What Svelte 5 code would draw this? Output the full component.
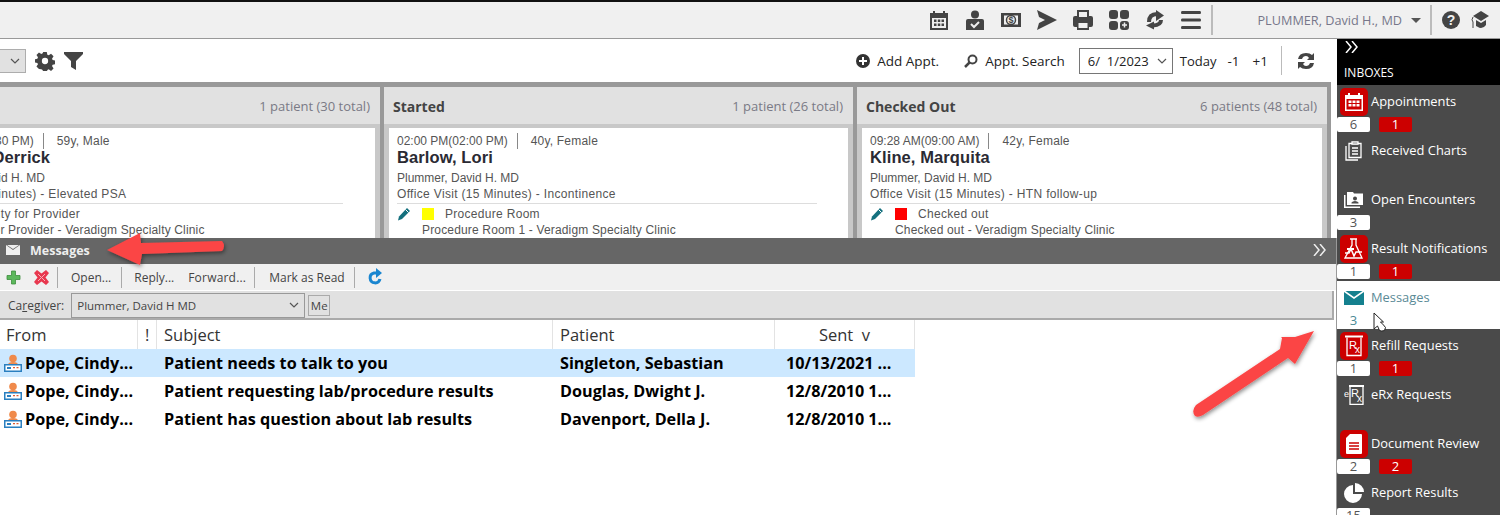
<script>
  const columns = [
    {
      title: '',
      count: '1 patient (30 total)',
      width: 470,
      time: '01:30 PM(01:30 PM)',
      age: '59y, Male',
      name: 'Morgan, Derrick',
      provider: 'Plummer, David H. MD',
      visit: 'Annual (15 Minutes) - Elevated PSA',
      status: 'Priority for Provider',
      location: 'Priority for Provider - Veradigm Specialty Clinic',
      color: '#fff'
    },
    {
      title: 'Started',
      count: '1 patient (26 total)',
      width: 469,
      time: '02:00 PM(02:00 PM)',
      age: '40y, Female',
      name: 'Barlow, Lori',
      provider: 'Plummer, David H. MD',
      visit: 'Office Visit (15 Minutes) - Incontinence',
      status: 'Procedure Room',
      location: 'Procedure Room 1 - Veradigm Specialty Clinic',
      color: '#ffff00'
    },
    {
      title: 'Checked Out',
      count: '6 patients (48 total)',
      width: 470,
      time: '09:28 AM(09:00 AM)',
      age: '42y, Female',
      name: 'Kline, Marquita',
      provider: 'Plummer, David H. MD',
      visit: 'Office Visit (15 Minutes) - HTN follow-up',
      status: 'Checked out',
      location: 'Checked out - Veradigm Specialty Clinic',
      color: '#ff0000'
    }
  ];

  const messages = [
    { from: 'Pope, Cindy...', subject: 'Patient needs to talk to you', patient: 'Singleton, Sebastian', sent: '10/13/2021 ...', selected: true },
    { from: 'Pope, Cindy...', subject: 'Patient requesting lab/procedure results', patient: 'Douglas, Dwight J.', sent: '12/8/2010 1...' },
    { from: 'Pope, Cindy...', subject: 'Patient has question about lab results', patient: 'Davenport, Della J.', sent: '12/8/2010 1...' }
  ];

  const inboxes = [
    { id: 'appointments', label: 'Appointments', count: '6', alert: '1' },
    { id: 'charts', label: 'Received Charts' },
    { id: 'encounters', label: 'Open Encounters', count: '3' },
    { id: 'results', label: 'Result Notifications', count: '1', alert: '1' },
    { id: 'messages', label: 'Messages', count: '3', active: true },
    { id: 'refill', label: 'Refill Requests', count: '1', alert: '1' },
    { id: 'erx', label: 'eRx Requests' },
    { id: 'documents', label: 'Document Review', count: '2', alert: '2' },
    { id: 'reports', label: 'Report Results', count: '15' }
  ];
</script>

<div class="page">
  <header class="topbar">
    <div class="top-icons">
      <svg width="20" height="20" viewBox="0 0 20 20"><path fill="#444" fill-rule="evenodd" d="M1 3h3V1h2v2h8V1h2v2h3v17H1zM3 8v10h14V8z"/><path fill="#444" d="M5 9.500h2.500V12H5zM8.800 9.500h2.500V12H8.800zM12.500 9.500H15V12h-2.500zM5 13.500h2.500V16H5zM8.800 13.500h2.500V16H8.800zM12.500 13.500H15V16h-2.500z"/></svg>
      <svg width="20" height="20" viewBox="0 0 20 20"><circle cx="10" cy="4.500" r="4" fill="#444"/><path fill="#444" d="M1 20v-9q0-2 2-2h14q2 0 2 2v9z"/><path fill="none" stroke="#eee" stroke-width="2" d="M6 14l3 3 5-5"/></svg>
      <svg width="20" height="20" viewBox="0 0 20 20"><path fill="#444" fill-rule="evenodd" d="M0 3h20v14H0zM3 5.500v9h14v-9z"/><circle cx="10" cy="10" r="4.500" fill="none" stroke="#444" stroke-width="1.500"/><text x="10" y="13" class="dollar">$</text></svg>
      <svg width="20" height="20" viewBox="0 0 20 20"><path fill="#444" d="M0 0l20 10L0 20l2-7 6-3-6-3z"/></svg>
      <svg width="20" height="20" viewBox="0 0 20 20"><path fill="#444" fill-rule="evenodd" d="M4 0h12v6h2q2 0 2 2v7q0 2-2 2h-2v3H4v-3H2q-2 0-2-2V8q0-2 2-2h2zM6 2v5h8V2zM5.500 13v5h9v-5z"/></svg>
      <svg width="20" height="20" viewBox="0 0 20 20"><rect width="9" height="9" rx="3" fill="#444"/><rect x="11" width="9" height="9" rx="3" fill="#444"/><rect y="11" width="9" height="9" rx="3" fill="#444"/><rect x="11" y="11" width="9" height="9" rx="3" fill="#444"/><path stroke="#eee" stroke-width="1.500" d="M15.500 12.500v5M13 15h5"/></svg>
      <svg width="20" height="20" viewBox="0 0 20 20"><path fill="none" stroke="#444" stroke-width="4" d="M4 12Q4 4 12 4"/><path fill="#444" d="M11 0l8 5.500-8 5.500z"/><path fill="none" stroke="#444" stroke-width="4" d="M16 10Q16 15 8 15.500"/><path fill="#444" d="M9 11.500l-8 4 8 4z"/></svg>
      <svg width="20" height="20" viewBox="0 0 20 20"><path fill="#444" d="M1 1h18q1 0 1 1.500T19 4H1Q0 4 0 2.500T1 1zM1 8.500h18q1 0 1 1.500t-1 1.500H1Q0 11.500 0 10t1-1.500zM1 16h18q1 0 1 1.500T19 19H1q-1 0-1-1.500T1 16z"/></svg>
    </div>
    <span class="top-sep first"></span>
    <span class="user">PLUMMER, David H., MD</span>
    <span class="caret"></span>
    <span class="top-sep"></span>
    <svg class="help" width="18" height="18" viewBox="0 0 18 18"><circle cx="9" cy="9" r="9" fill="#444"/><text x="9" y="14" class="qmark">?</text></svg>
    <svg class="cap" width="18" height="18" viewBox="0 0 18 18"><path fill="#444" d="M10 0l8 5-8 5-8-5zM5 9l5 3 5-3v5q-2 3-5 3-2 0-3-1l-2-1z"/><path fill="none" stroke="#444" d="M2 6q-2 3 0 5v6"/></svg>
  </header>

  <div class="workspace">
    <main class="main">
      <div class="toolbar">
        <div class="select-stub"><svg width="10" height="6" viewBox="0 0 10 6"><path fill="none" stroke="#555" stroke-width="1.200" d="M1 1l4 4 4-4"/></svg></div>
        <svg class="gear" width="20" height="20" viewBox="0 0 20 20"><path fill="#444" fill-rule="evenodd" d="M8 0h4l.6 3 1.500.7 2.600-1.700 2.800 2.800-1.700 2.600.7 1.500 3 .6v4l-3 .6-.7 1.500 1.700 2.600-2.800 2.800-2.600-1.700-1.500.7-.6 3H8l-.6-3-1.500-.7L3.300 19 .5 16.200l1.700-2.600-.7-1.500-3-.6V8l3-.6.7-1.500L.5 3.300 3.300.5l2.600 1.700 1.500-.7zM10 6.500a3.500 3.500 0 1 0 0 7 3.500 3.500 0 0 0 0-7z" transform="translate(1 1) scale(.9)"/></svg>
        <svg class="filter" width="20" height="18" viewBox="0 0 20 18"><path fill="#444" d="M0 0h19v2l-7 7v9l-5-3V9L0 2z"/></svg>
        <span class="spacer"></span>
        <button class="tool add"><svg width="14" height="14" viewBox="0 0 14 14"><circle cx="7" cy="7" r="7" fill="#333"/><path stroke="#fff" stroke-width="2" d="M7 3v8M3 7h8"/></svg>Add Appt.</button>
        <button class="tool search"><svg width="14" height="14" viewBox="0 0 14 14"><circle cx="8.500" cy="5.500" r="4" fill="none" stroke="#444" stroke-width="2"/><path stroke="#444" stroke-width="2.500" d="M5.500 8.500L1 13"/></svg>Appt. Search</button>
        <div class="date">6/ &nbsp;1/2023<svg width="10" height="6" viewBox="0 0 10 6"><path fill="none" stroke="#555" stroke-width="1.200" d="M1 1l4 4 4-4"/></svg></div>
        <span class="today">Today</span>
        <span class="step">-1</span>
        <span class="step plus">+1</span>
        <span class="tool-sep"></span>
        <svg class="refresh" width="20" height="18" viewBox="0 0 20 18"><path fill="#444" d="M2 7q1-6 8-6 4 0 6 2l2-2v7h-7l2-2q-1-2-3-2-3 0-4 3zM18 11q-1 6-8 6-4 0-6-2l-2 2v-7h7l-2 2q1 2 3 2 3 0 4-3z"/></svg>
      </div>

      <section class="board">
        {#each columns as col}
          <article class="column" style="width: {col.width}px">
            <div class="col-head">
              <strong>{col.title}</strong>
              <span>{col.count}</span>
            </div>
            <div class="card">
              <div class="times"><span class="time">{col.time}</span><span class="age">{col.age}</span></div>
              <div class="name">{col.name}</div>
              <div class="line provider">{col.provider}</div>
              <div class="line visit">{col.visit}</div>
              <hr />
              <div class="status">
                <svg width="14" height="14" viewBox="0 0 14 14"><path fill="#14707e" d="M10 1l3 3-8 8-4 1.500L2 9.500z"/><path stroke="#fff" d="M8.500 2.500l3 3"/></svg>
                <i style="background: {col.color}"></i>
                <span>{col.status}</span>
              </div>
              <div class="line location">{col.location}</div>
            </div>
          </article>
        {/each}
      </section>

      <section class="messages">
        <div class="msg-title">
          <svg width="14" height="10" viewBox="0 0 14 10"><path fill="#eee" d="M0 0l7 5 7-5v10H0z"/><path fill="#eee" d="M1 0h12L7 4z"/></svg>
          <strong>Messages</strong>
          <span class="spacer"></span>
          <svg class="chev" width="14" height="12" viewBox="0 0 14 12"><path fill="none" stroke="#eee" stroke-width="1.500" d="M1 0l5 6-5 6M7 0l5 6-5 6"/></svg>
        </div>
        <div class="msg-tools">
          <svg class="plus-i" width="15" height="15" viewBox="0 0 15 15"><path fill="#5cb85c" stroke="#3e8e3e" stroke-width=".8" d="M5.500 1h4v4.500H14v4H9.500V14h-4V9.500H1v-4h4.500z"/></svg>
          <svg class="x-i" width="15" height="15" viewBox="0 0 15 15"><path fill="#e8384f" d="M3 0l4.500 3.500L12 0l3 3-3.500 4.500L15 12l-3 3-4.500-3.500L3 15l-3-3 3.500-4.500L0 3z"/><path stroke="#f8b0b8" d="M4 4l7 7M11 4l-7 7"/></svg>
          <span class="v"></span>
          <span class="cmd open">Open...</span>
          <span class="v wide"></span>
          <span class="cmd reply">Reply...</span>
          <span class="cmd forward">Forward...</span>
          <span class="v"></span>
          <span class="cmd mark">Mark as Read</span>
          <span class="v last"></span>
          <svg class="renew" width="16" height="18" viewBox="0 0 16 18"><path fill="none" stroke="#1a86d0" stroke-width="3" d="M9 5H7a5 5 0 1 0 6 6"/><path fill="#1a86d0" d="M9 0l6 5-6 5z"/></svg>
        </div>
        <div class="caregiver">
          <span class="cg-label">Ca<u>r</u>egiver:</span>
          <div class="cg-select">Plummer, David H MD<svg width="10" height="6" viewBox="0 0 10 6"><path fill="none" stroke="#555" stroke-width="1.200" d="M1 1l4 4 4-4"/></svg></div>
          <div class="me">Me</div>
        </div>
        <div class="table">
          <div class="row head">
            <div class="c-from">From</div>
            <div class="c-flag">!</div>
            <div class="c-subject">Subject</div>
            <div class="c-patient">Patient</div>
            <div class="c-sent">Sent &nbsp;v</div>
          </div>
          {#each messages as m}
            <div class="row item" class:selected={m.selected}>
              <div class="c-from">
                <svg width="18" height="18" viewBox="0 0 18 18"><circle cx="9" cy="4.500" r="3.800" fill="#f08a4b"/><path fill="#f08a4b" d="M4 11q0-3 5-3t5 3z"/><path fill="#2a7fc0" d="M0 10h18v8H0z"/><path fill="#fff" d="M1.500 11.500h15v5h-15z"/><path fill="#2a7fc0" d="M3 13h4v2H3z"/><path fill="#e05a30" d="M9 13h2v1.200H9zM12.500 13h2v1.200h-2z"/></svg>
                <span>{m.from}</span>
              </div>
              <div class="c-flag"></div>
              <div class="c-subject">{m.subject}</div>
              <div class="c-patient">{m.patient}</div>
              <div class="c-sent">{m.sent}</div>
            </div>
          {/each}
        </div>
      </section>
    </main>

    <aside class="inboxes">
      <div class="ib-head">
        <svg width="14" height="12" viewBox="0 0 14 12"><path fill="none" stroke="#fff" stroke-width="1.500" d="M1 0l5 6-5 6M7 0l5 6-5 6"/></svg>
        <span>INBOXES</span>
      </div>
      {#each inboxes as box}
        <div class="box" class:active={box.active}>
          <div class="box-top">
            <div class="ib-icon" class:alert={box.alert}>
              {#if box.id === 'appointments'}
                <svg width="20" height="20" viewBox="0 0 20 20"><path fill="#fff" fill-rule="evenodd" d="M1 3h3V1h2v2h8V1h2v2h3v16H1zM2.500 7v10.500h15V7z"/><path fill="#fff" d="M4.500 8.500h3V11h-3zM8.500 8.500h3V11h-3zM12.500 8.500h3V11h-3zM4.500 12h3v2.500h-3zM8.500 12h3v2.500h-3zM12.500 12h3v2.500h-3z"/></svg>
              {:else if box.id === 'charts'}
                <svg width="18" height="20" viewBox="0 0 18 20"><path fill="none" stroke="#fff" stroke-width="1.300" d="M1 5v14h12M4 2.500h12v14H4z"/><path stroke="#fff" stroke-width="1.300" d="M7 7h6M7 10h6M7 13h6M7 1h6v2H7z"/></svg>
              {:else if box.id === 'encounters'}
                <svg width="20" height="18" viewBox="0 0 20 18"><path fill="#fff" d="M0 4h1.500v11.500H16V17H0z"/><path fill="#fff" fill-rule="evenodd" d="M3 1h6l1 1.500h9V14H3zM11 5.500a2 2 0 1 0 0 4 2 2 0 0 0 0-4zM7.500 11.500v1h7v-1q-1-1.500-3.500-1.500t-3.500 1.500z"/></svg>
              {:else if box.id === 'results'}
                <svg width="20" height="22" viewBox="0 0 20 22"><path fill="none" stroke="#fff" stroke-width="1.300" d="M6 1h7M8 1v6l-7 13h17L12 7V1"/><path fill="#fff" d="M3 10h7v2H3z"/><path fill="none" stroke="#fff" stroke-width="1.500" d="M1 15h4l2-4 3 7 2-4h6"/></svg>
              {:else if box.id === 'messages'}
                <svg width="20" height="14" viewBox="0 0 20 14"><path fill="#14808e" d="M0 1l10 7 10-7v13H0z"/><path fill="#14808e" d="M1.500 0h17L10 6z"/></svg>
              {:else if box.id === 'refill'}
                <svg width="18" height="22" viewBox="0 0 18 22"><path fill="none" stroke="#fff" stroke-width="1.300" d="M2 2.500v18h14v-18"/><path stroke="#fff" stroke-width="2" d="M0 1.500h18"/><text x="4" y="14" class="rx">R</text><text x="10" y="18" class="rx small">x</text></svg>
              {:else if box.id === 'erx'}
                <svg width="20" height="20" viewBox="0 0 20 20"><path fill="none" stroke="#fff" stroke-width="1.300" d="M6 1.500v18h13v-18"/><path stroke="#fff" stroke-width="2" d="M5 1h15"/><text x="0" y="12" class="rx e">e</text><text x="7" y="12" class="rx">R</text><text x="13" y="17" class="rx small">x</text></svg>
              {:else if box.id === 'documents'}
                <svg width="18" height="20" viewBox="0 0 18 20"><path fill="#fff" d="M5 0h11q1 0 1 1v18q0 1-1 1H2q-1 0-1-1V4z"/><path stroke="#c00" stroke-width="1.500" d="M4 9h10M4 12h10M4 15h10"/></svg>
              {:else}
                <svg width="20" height="20" viewBox="0 0 20 20"><path fill="#fff" d="M9 2v9h9a9 9 0 1 1-9-9zM11 0a9 9 0 0 1 9 9h-9z"/></svg>
              {/if}
            </div>
            <span class="label">{box.label}</span>
          </div>
          <div class="badges">
            {#if box.count}<span class="count">{box.count}</span>{/if}
            {#if box.alert}<span class="warn">{box.alert}</span>{/if}
          </div>
        </div>
      {/each}
    </aside>
  </div>

  <svg class="overlay" width="1500" height="515" viewBox="0 0 1500 515">
    <defs>
      <filter id="shade" x="-20%" y="-40%" width="140%" height="180%">
        <feDropShadow dx="1" dy="2" stdDeviation="2" flood-color="#000" flood-opacity=".45" />
      </filter>
    </defs>
    <path filter="url(#shade)" fill="#fb4545" d="M107 250L140 233L141 243L222 241Q226 246 222 251L142 254L140 265z" />
    <path filter="url(#shade)" fill="#fb4545" d="M1314 331L1295 337L1281 337L1282 338L1280 349L1196 405Q1191 411 1195 416Q1198 418 1203 415L1288 358L1295 364z" />
    <path fill="#fff" stroke="#222" d="M1374 313v16l3.500-3 2 4.500q2 1 5 0l1-3 -2-2.500 -3-3h3z" />
  </svg>
</div>

<style>
  :global(body) {
    margin: 0;
    background: #fff;
  }

  .page {
    position: relative;
    width: 1500px;
    height: 515px;
    overflow: hidden;
    font-family: "Open Sans", sans-serif;
    color: #333;
  }

  .overlay {
    position: absolute;
    left: 0;
    top: 0;
    pointer-events: none;
  }

  .spacer {
    flex: 1;
  }

  /* top bar */
  .topbar {
    height: 36px;
    box-sizing: content-box;
    border-top: 2px solid #111;
    border-bottom: 1px solid #999;
    background: #f0f0f0;
    display: flex;
    align-items: center;
    justify-content: flex-end;
  }

  .top-icons {
    display: flex;
    gap: 16px;
    margin-right: 10px;
    align-items: center;
  }

  .dollar,
  .qmark {
    font-family: "Liberation Sans", sans-serif;
    font-weight: 700;
    text-anchor: middle;
    fill: #444;
  }

  .dollar {
    font-size: 9px;
  }

  .qmark {
    font-size: 14px;
    fill: #f0f0f0;
  }

  .top-sep {
    width: 2px;
    height: 30px;
    background: #bbb;
    margin: 0 10px 0 0;
  }

  .top-sep.first {
    margin-right: 44px;
  }

  .user {
    font-size: 12.700px;
    color: #77778a;
  }

  .caret {
    width: 0;
    height: 0;
    border-left: 5px solid transparent;
    border-right: 5px solid transparent;
    border-top: 5px solid #555;
    margin: 0 9px 0 9px;
  }

  .help {
    margin-right: 11px;
  }

  .cap {
    margin-right: 11px;
  }

  /* layout */
  .workspace {
    display: flex;
    height: 477px;
  }

  .main {
    width: 1337px;
    flex: none;
    display: flex;
    flex-direction: column;
    overflow: hidden;
    box-sizing: border-box;
  }

  /* appointment toolbar */
  .toolbar {
    height: 43px;
    width: 1331px;
    display: flex;
    align-items: center;
    flex: none;
    font-size: 13.500px;
    color: #222;
  }

  .select-stub {
    width: 26px;
    height: 24px;
    background: #e1e1e1;
    border: 1px solid #adadad;
    border-left: none;
    display: flex;
    align-items: center;
    justify-content: flex-end;
    padding-right: 5px;
    box-sizing: border-box;
  }

  .gear {
    margin-left: 9px;
  }

  .filter {
    margin-left: 9px;
  }

  .tool {
    border: none;
    background: none;
    padding: 0;
    font: inherit;
    color: inherit;
    display: flex;
    align-items: center;
    gap: 7px;
  }

  .search {
    margin-left: 25px;
  }

  .date {
    margin-left: 14px;
    width: 94px;
    height: 26px;
    box-sizing: border-box;
    border: 1px solid #767676;
    display: flex;
    align-items: center;
    justify-content: space-between;
    padding: 0 5px 0 8px;
    font-size: 13px;
  }

  .today {
    margin-left: 7px;
    font-size: 13px;
  }

  .step {
    margin-left: 11px;
  }

  .plus {
    margin-left: 13px;
  }

  .tool-sep {
    width: 1px;
    height: 29px;
    background: #bbb;
    margin-left: 13px;
  }

  .refresh {
    margin: 0 15px 0 14px;
  }

  /* schedule board */
  .board {
    height: 156px;
    flex: none;
    width: 1331px;
    background: #999;
    padding: 5px 4px 0 0;
    box-sizing: border-box;
    display: flex;
    justify-content: flex-end;
    gap: 4px;
    overflow: hidden;
  }

  .column {
    flex: none;
    background: #c8c8c8;
    display: flex;
    flex-direction: column;
    padding: 0 5px;
    box-sizing: border-box;
  }

  .col-head {
    height: 37px;
    margin: 0 -5px 4px;
    padding: 1px 10px 0 10px;
    box-sizing: border-box;
    background: #e1e1e1;
    display: flex;
    align-items: center;
    justify-content: space-between;
    font-size: 13px;
    color: #7a7a85;
  }

  .col-head strong {
    font-size: 14px;
    color: #444;
    margin-left: -1px;
  }

  .card {
    flex: 1;
    background: #fff;
    padding: 5px 8px 0;
    font-family: "Liberation Sans", sans-serif;
    font-size: 12px;
    color: #555;
    overflow: hidden;
  }

  .times {
    display: flex;
    height: 16px;
    line-height: 16px;
    align-items: center;
  }

  .time {
    padding-right: 9px;
    border-right: 1px solid #888;
    line-height: 16px;
  }

  .age {
    padding-left: 13px;
    letter-spacing: .2px;
  }

  .name {
    font-size: 16.500px;
    letter-spacing: .1px;
    font-weight: 700;
    line-height: 17px;
    color: #2a2a33;
    margin-bottom: 4px;
    white-space: nowrap;
  }

  .line {
    line-height: 16px;
    white-space: nowrap;
  }

  .visit {
    letter-spacing: .33px;
  }

  .location {
    padding-left: 25px;
    letter-spacing: .16px;
  }

  hr {
    width: 420px;
    border: none;
    border-top: 1px solid #ddd;
    margin: 1px 0 1px;
  }

  .status {
    display: flex;
    align-items: center;
    height: 17px;
    gap: 11px;
    white-space: nowrap;
    letter-spacing: .3px;
  }

  .status i {
    width: 12px;
    height: 12px;
    display: block;
  }

  /* messages panel */
  .messages {
    flex: 1;
    display: flex;
    flex-direction: column;
    border-right: 1px solid #999;
  }

  .msg-title {
    height: 26px;
    flex: none;
    box-sizing: border-box;
    background: #666;
    color: #eee;
    display: flex;
    align-items: center;
    padding: 0 9px 2px 6px;
    gap: 10px;
    font-size: 12.500px;
  }

  .msg-tools {
    height: 26px;
    flex: none;
    background: #f0f0f0;
    display: flex;
    align-items: center;
    font-size: 12px;
    color: #444;
    padding-left: 6px;
    border-bottom: 1px solid #fff;
  }

  .x-i {
    margin-left: 13px;
  }

  .v {
    width: 1px;
    height: 21px;
    background: #aaa;
    margin-left: 8px;
  }

  .v.wide {
    margin-left: 10px;
  }

  .v.last {
    margin-left: 9px;
  }

  .cmd {
    margin-left: 12px;
    white-space: nowrap;
  }

  .open {
    margin-left: 13px;
  }

  .forward {
    margin-left: 14px;
    letter-spacing: .2px;
  }

  .mark {
    margin-left: 14px;
  }

  .renew {
    margin-left: 12px;
  }

  .caregiver {
    height: 29px;
    flex: none;
    margin-right: 2px;
    box-sizing: border-box;
    background: #e1e1e1;
    border-bottom: 2px solid #aaa;
    border-right: 2px solid #aaa;
    display: flex;
    align-items: center;
    font-size: 11.500px;
    color: #444;
    padding: 1px 0 0 8px;
  }

  .cg-label {
    font-size: 12px;
  }

  .cg-select {
    margin-left: 7px;
    width: 234px;
    height: 25px;
    box-sizing: border-box;
    background: #e1e1e1;
    border: 1px solid #999;
    display: flex;
    align-items: center;
    justify-content: space-between;
    padding: 0 5px;
    font-size: 11.500px;
  }

  .me {
    margin-left: 3px;
    width: 22px;
    height: 21px;
    box-sizing: border-box;
    border: 1px solid #aaa;
    text-align: center;
    line-height: 19px;
  }

  .table {
    width: 915px;
    color: #000;
  }

  .row {
    display: grid;
    grid-template-columns: 138px 19px 396px 222px 140px;
    align-items: center;
    height: 28px;
    font-size: 16.200px;
  }

  .row > div {
    padding-left: 7px;
    white-space: nowrap;
    overflow: hidden;
    box-sizing: border-box;
  }

  .row.head {
    height: 29px;
    font-size: 16.500px;
    color: #333;
  }

  .row.head > div {
    height: 100%;
    line-height: 29px;
    border-right: 1px solid #e3e3e3;
  }

  .row.head .c-from {
    padding-left: 6px;
  }

  .row.head .c-sent {
    text-align: center;
    padding-left: 0;
  }

  .row.item {
    font-weight: 700;
  }

  .row.item .c-from {
    display: flex;
    align-items: center;
    gap: 3px;
    padding-left: 4px;
  }

  .row.item .c-sent {
    padding-left: 11px;
  }

  .row.selected {
    background: #cce8ff;
  }

  /* inbox sidebar */
  .inboxes {
    flex: 1;
    background: #4a4a4a;
    color: #fff;
    font-size: 12.900px;
    overflow: hidden;
  }

  .ib-head {
    height: 47px;
    background: #000;
    display: flex;
    flex-direction: column;
    align-items: flex-start;
    padding: 3px 0 0 8px;
    box-sizing: border-box;
    gap: 11px;
    font-size: 12px;
    margin-top: -1px;
  }

  .ib-head span {
    margin-left: -1px;
  }

  .box {
    height: 48.900px;
    box-sizing: border-box;
  }

  .box.active {
    background: #fff;
    color: #5a8a96;
  }

  .box-top {
    height: 32px;
    display: flex;
    align-items: center;
  }

  .ib-icon {
    width: 28px;
    height: 28px;
    margin: 2px 3px 0 3px;
    border-radius: 5px;
    display: flex;
    align-items: center;
    justify-content: center;
    flex: none;
  }

  .ib-icon.alert {
    background: #c00;
  }

  .rx {
    font-family: "Liberation Sans", sans-serif;
    font-size: 11px;
    fill: #fff;
  }

  .rx.small {
    font-size: 10px;
  }

  .rx.e {
    font-size: 9px;
  }

  .label {
    white-space: nowrap;
  }

  .badges {
    display: flex;
    height: 15px;
  }

  .badges span {
    height: 15px;
    line-height: 15px;
    width: 33px;
    text-align: center;
    font-size: 13px;
    display: block;
  }

  .count {
    background: #fff;
    color: #555;
    border-radius: 2px;
  }

  .active .count {
    color: #4a8a96;
  }

  .warn {
    background: #c00;
    color: #fff;
    margin-left: 9px;
    border-radius: 2px;
  }
</style>
